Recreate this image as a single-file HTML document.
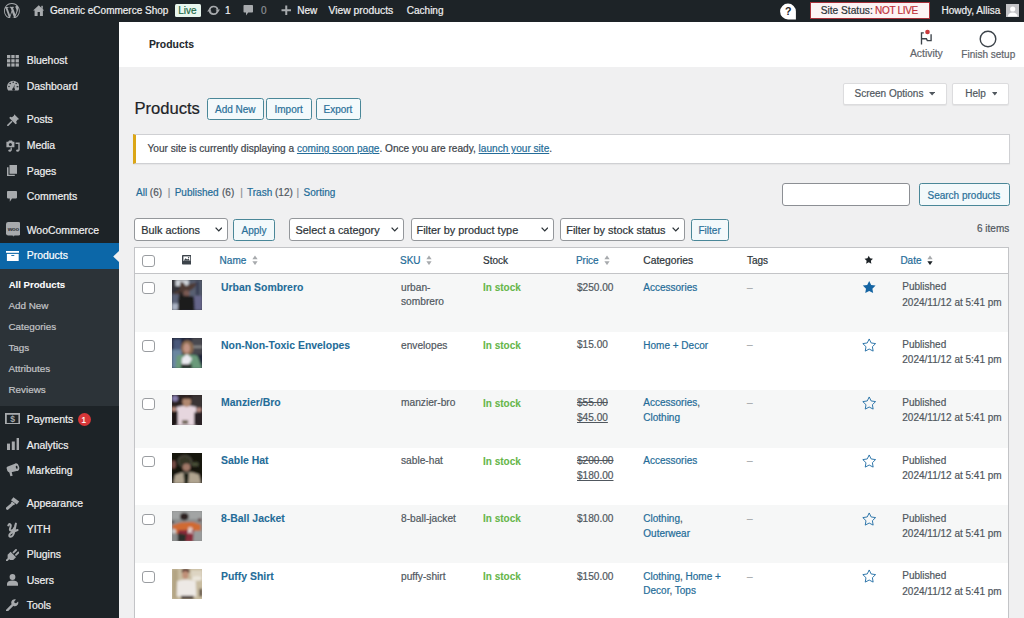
<!DOCTYPE html>
<html><head><meta charset="utf-8"><title>Products</title>
<style>
html,body{margin:0;padding:0;}
body{width:1024px;height:618px;overflow:hidden;position:relative;background:#f0f0f1;font-family:"Liberation Sans", sans-serif;}
.t{position:absolute;white-space:nowrap;line-height:1;-webkit-text-stroke:0.2px currentColor;}
svg{display:block}
</style></head><body>
<div style="position:absolute;left:0.0px;top:0.0px;width:1024.0px;height:22.0px;background:#1d2327"></div>
<div style="position:absolute;left:0.0px;top:22.0px;width:118.5px;height:596.0px;background:#1d2327"></div>
<div style="position:absolute;left:118.5px;top:22.0px;width:905.5px;height:45.0px;background:#fff"></div>
<svg style="position:absolute;left:4.1px;top:2.6px" width="15.8" height="15.8" viewBox="0 0 20 20"><path fill="#a7aaad" d="M20 10c0-5.51-4.49-10-10-10C4.48 0 0 4.49 0 10c0 5.52 4.48 10 10 10 5.51 0 10-4.48 10-10zM7.78 15.37L4.37 6.22c.55-.02 1.17-.08 1.17-.08.5-.06.44-1.13-.06-1.11 0 0-1.450.11-2.37.11-.18 0-.37 0-.58-.01C4.12 2.690 6.87 1.11 10 1.11c2.33 0 4.450.87 6.05 2.34-.68-.11-1.650.39-1.650 1.58 0 .74.450 1.360.9 2.1.35.61.55 1.360.55 2.46 0 1.49-1.4 5-1.4 5l-3.03-8.37c.54-.02.82-.17.82-.17.5-.05.44-1.25-.06-1.22 0 0-1.44.12-2.38.12-.87 0-2.33-.12-2.33-.12-.5-.03-.56 1.2-.06 1.22l.92.08 1.260 3.41zM17.41 10c.24-.64.74-1.870.43-4.25.7 1.290 1.050 2.710 1.050 4.25 0 3.290-1.730 6.240-4.48 7.780.99-2.650 1.99-5.330 3-7.780zM6.1 18.09C3.12 16.65 1.11 13.53 1.11 10c0-1.3.23-2.48.72-3.590C3.25 10.3 4.670 14.2 6.1 18.09zm4.03-6.630l2.58 6.98c-.86.29-1.76.45-2.71.45-.79 0-1.570-.11-2.29-.33.81-2.380 1.620-4.740 2.420-7.1z"/></svg>
<svg style="position:absolute;left:32.5px;top:5px" width="11.5" height="11" viewBox="0 0 11.5 11"><path d="M5.75 0.3 L11.4 5.6 L9.9 5.6 L9.9 11 L1.6 11 L1.6 5.6 L0.1 5.6 Z" fill="#a7aaad"/><rect x="4.6" y="7" width="2.3" height="4" fill="#1d2327"/><rect x="8.3" y="0.8" width="1.5" height="3" fill="#a7aaad"/></svg>
<div class="t" style="left:50.0px;top:6.34px;font-size:10px;font-weight:normal;color:#f0f0f1;">Generic eCommerce Shop</div>
<div style="position:absolute;left:174.6px;top:3.7px;width:26.2px;height:13.1px;background:#e8f6ee;border-radius:1.5px"></div>
<div class="t" style="left:178.2px;top:6.34px;font-size:10px;font-weight:normal;color:#1f6b47;font-weight:normal">Live</div>
<svg style="position:absolute;left:206px;top:4px" width="16" height="13" viewBox="0 0 16 13"><path d="M3.5 6 A4.2 4.2 0 0 1 11.7 5.6" fill="none" stroke="#a7aaad" stroke-width="1.7"/><path d="M11.7 6.6 A4.2 4.2 0 0 1 3.5 7" fill="none" stroke="#a7aaad" stroke-width="1.7"/><path d="M9.6 5.4 L14 5.4 L11.8 8.4 Z" fill="#a7aaad"/><path d="M1.2 7.4 L5.6 7.4 L3.4 4.4 Z" fill="#a7aaad"/></svg>
<div class="t" style="left:225.0px;top:6.34px;font-size:10px;font-weight:normal;color:#f0f0f1;">1</div>
<svg style="position:absolute;left:243px;top:5.4px" width="10.5" height="11" viewBox="0 0 10.5 11"><path d="M0.5 0.8 Q0.5 0 1.3 0 H9.2 Q10 0 10 0.8 V6.8 Q10 7.6 9.2 7.6 H5.2 L3 10.6 L3 7.6 H1.3 Q0.5 7.6 0.5 6.8 Z" fill="#a7aaad"/></svg>
<div class="t" style="left:261.0px;top:6.34px;font-size:10px;font-weight:normal;color:#8c8f94;">0</div>
<svg style="position:absolute;left:280.5px;top:5.4px" width="10.5" height="10.5" viewBox="0 0 10.5 10.5"><path d="M5.25 0.5 V10 M0.5 5.25 H10" stroke="#a7aaad" stroke-width="2"/></svg>
<div class="t" style="left:297.3px;top:6.34px;font-size:10px;font-weight:normal;color:#f0f0f1;">New</div>
<div class="t" style="left:328.5px;top:6.04px;font-size:10.35px;font-weight:normal;color:#f0f0f1;">View products</div>
<div class="t" style="left:406.8px;top:6.34px;font-size:10px;font-weight:normal;color:#f0f0f1;">Caching</div>
<svg style="position:absolute;left:776px;top:0px" width="26" height="22" viewBox="0 0 26 22"><path d="M12 3.6 A7.9 7.9 0 1 0 12 19.4 H19.9 V11.5 A7.9 7.9 0 0 0 12 3.6 Z" fill="#fff"/><text x="12.3" y="15.2" font-family="Liberation Sans" font-weight="bold" font-size="10.6" text-anchor="middle" fill="#1d2327">?</text></svg>
<div style="position:absolute;left:809.5px;top:2.0px;width:120.0px;height:17.2px;background:#fdf3f4;border:1.2px solid #a8303a;box-sizing:border-box"></div>
<div class="t" style="left:820.7px;top:6.17px;font-size:10.2px;font-weight:normal;color:#2c3338;">Site Status:</div>
<div class="t" style="left:875.0px;top:6.34px;font-size:10px;font-weight:normal;color:#c0303a;letter-spacing:-0.3px">NOT LIVE</div>
<div class="t" style="left:941.5px;top:6.34px;font-size:10px;font-weight:normal;color:#f0f0f1;">Howdy, Allisa</div>
<div style="position:absolute;left:1005.5px;top:3.9px;width:13.4px;height:13.2px;background:#c3c4c7"></div>
<svg style="position:absolute;left:1005.5px;top:3.9px" width="13.4" height="13.2" viewBox="0 0 13.4 13.2"><circle cx="6.7" cy="5" r="2.6" fill="#fff"/><path d="M1.8 12.6 Q2 8.6 6.7 8.4 Q11.4 8.6 11.6 12.6 Z" fill="#fff"/></svg>
<div class="t" style="left:148.9px;top:40.20px;font-size:10.4px;font-weight:bold;color:#23282d;-webkit-text-stroke:0.08px currentColor;">Products</div>
<svg style="position:absolute;left:912px;top:24px" width="28" height="26" viewBox="0 0 28 26"><path d="M9.5 8.2 V20.6 M9.5 8.8 H11.8 M9.5 14.7 H14.4 L15.3 16.6 H19.1 V10.3" fill="none" stroke="#3c434a" stroke-width="1.35"/><circle cx="15.5" cy="8" r="2.3" fill="#c93a3c"/></svg>
<div class="t" style="left:909.9px;top:49.30px;font-size:10.4px;font-weight:normal;color:#5f656b;">Activity</div>
<svg style="position:absolute;left:979px;top:29.8px" width="18" height="18" viewBox="0 0 18 18"><circle cx="9" cy="9" r="7.8" fill="none" stroke="#3c434a" stroke-width="1.4"/></svg>
<div class="t" style="left:961.3px;top:49.64px;font-size:10px;font-weight:normal;color:#5f656b;">Finish setup</div>
<div style="position:absolute;left:0.0px;top:242.5px;width:118.5px;height:26.0px;background:#0c67a8"></div>
<svg style="position:absolute;left:112.8px;top:250.5px" width="6" height="11" viewBox="0 0 6 11"><path d="M6 0 L0.2 5.5 L6 11 Z" fill="#f0f0f1"/></svg>
<div style="position:absolute;left:0.0px;top:269.0px;width:118.5px;height:136.6px;background:#2c3338"></div>
<div class="t" style="left:26.7px;top:56.25px;font-size:10.45px;font-weight:normal;color:#f0f0f1;">Bluehost</div>
<div class="t" style="left:26.7px;top:81.65px;font-size:10.45px;font-weight:normal;color:#f0f0f1;">Dashboard</div>
<div class="t" style="left:26.7px;top:115.15px;font-size:10.45px;font-weight:normal;color:#f0f0f1;">Posts</div>
<div class="t" style="left:26.7px;top:141.25px;font-size:10.45px;font-weight:normal;color:#f0f0f1;">Media</div>
<div class="t" style="left:26.7px;top:166.65px;font-size:10.45px;font-weight:normal;color:#f0f0f1;">Pages</div>
<div class="t" style="left:26.7px;top:191.85px;font-size:10.45px;font-weight:normal;color:#f0f0f1;">Comments</div>
<div class="t" style="left:26.7px;top:225.85px;font-size:10.45px;font-weight:normal;color:#f0f0f1;">WooCommerce</div>
<div class="t" style="left:26.7px;top:251.05px;font-size:10.45px;font-weight:normal;color:#fff;">Products</div>
<div class="t" style="left:26.7px;top:414.95px;font-size:10.45px;font-weight:normal;color:#f0f0f1;">Payments</div>
<div class="t" style="left:26.7px;top:440.55px;font-size:10.45px;font-weight:normal;color:#f0f0f1;">Analytics</div>
<div class="t" style="left:26.7px;top:466.15px;font-size:10.45px;font-weight:normal;color:#f0f0f1;">Marketing</div>
<div class="t" style="left:26.7px;top:499.15px;font-size:10.45px;font-weight:normal;color:#f0f0f1;">Appearance</div>
<div class="t" style="left:26.7px;top:524.55px;font-size:10.45px;font-weight:normal;color:#f0f0f1;">YITH</div>
<div class="t" style="left:26.7px;top:550.05px;font-size:10.45px;font-weight:normal;color:#f0f0f1;">Plugins</div>
<div class="t" style="left:26.7px;top:575.75px;font-size:10.45px;font-weight:normal;color:#f0f0f1;">Users</div>
<div class="t" style="left:26.7px;top:601.45px;font-size:10.45px;font-weight:normal;color:#f0f0f1;">Tools</div>
<div class="t" style="left:8.7px;top:280.37px;font-size:9.6px;font-weight:bold;color:#fff;-webkit-text-stroke:0.08px currentColor;">All Products</div>
<div class="t" style="left:8.4px;top:301.32px;font-size:9.9px;font-weight:normal;color:#c3c4c7;">Add New</div>
<div class="t" style="left:8.4px;top:322.32px;font-size:9.9px;font-weight:normal;color:#c3c4c7;">Categories</div>
<div class="t" style="left:8.4px;top:343.22px;font-size:9.9px;font-weight:normal;color:#c3c4c7;">Tags</div>
<div class="t" style="left:8.4px;top:364.12px;font-size:9.9px;font-weight:normal;color:#c3c4c7;">Attributes</div>
<div class="t" style="left:8.4px;top:384.92px;font-size:9.9px;font-weight:normal;color:#c3c4c7;">Reviews</div>
<svg style="position:absolute;left:6.5px;top:54.5px" width="12.5" height="12.3" viewBox="0 0 12.5 12.3"><rect x="0.0" y="0.0" width="3.3" height="3.2" fill="#a7aaad"/><rect x="4.3" y="0.0" width="3.3" height="3.2" fill="#a7aaad"/><rect x="8.6" y="0.0" width="3.3" height="3.2" fill="#a7aaad"/><rect x="0.0" y="4.2" width="3.3" height="3.2" fill="#a7aaad"/><rect x="4.3" y="4.2" width="3.3" height="3.2" fill="#a7aaad"/><rect x="8.6" y="4.2" width="3.3" height="3.2" fill="#a7aaad"/><rect x="0.0" y="8.4" width="3.3" height="3.2" fill="#a7aaad"/><rect x="4.3" y="8.4" width="3.3" height="3.2" fill="#a7aaad"/><rect x="8.6" y="8.4" width="3.3" height="3.2" fill="#a7aaad"/></svg>
<svg style="position:absolute;left:6.7px;top:80px" width="12.4" height="10.8" viewBox="0 0 12.4 10.8"><path d="M1.2 10.6 A6.2 6.2 0 1 1 11.2 10.6 Z" fill="#a7aaad"/><path d="M5.6 9.6 L7.6 4.6 L7.2 9.8 Z" fill="#1d2327"/><circle cx="6.6" cy="9.4" r="1.3" fill="#1d2327"/><circle cx="3.2" cy="3.6" r="0.75" fill="#1d2327"/><circle cx="6.2" cy="2.2" r="0.75" fill="#1d2327"/><circle cx="9.2" cy="3.6" r="0.75" fill="#1d2327"/><circle cx="2" cy="6.6" r="0.75" fill="#1d2327"/><path d="M9.6 6.7 H11.4" stroke="#1d2327" stroke-width="1.2"/></svg>
<svg style="position:absolute;left:6.5px;top:113.5px" width="12.5" height="12" viewBox="0 0 12.5 12"><path d="M7.2 0.3 L12.2 5.3 L10.8 5.6 L9.2 7.6 L9.8 9.4 L8.6 10.2 L2.3 3.9 L3.1 2.7 L4.9 3.3 L6.9 1.7 Z" fill="#a7aaad"/><path d="M5 7.3 L0.4 11.8" stroke="#a7aaad" stroke-width="1.6"/></svg>
<svg style="position:absolute;left:6px;top:139.8px" width="13.5" height="12" viewBox="0 0 13.5 12"><path d="M0.4 1.8 H2.2 L3 0.4 H6 L6.8 1.8 H8.4 V7.2 H0.4 Z" fill="#a7aaad"/><circle cx="4.4" cy="4.4" r="1.5" fill="#1d2327"/><path d="M9.6 3.2 H13 V10.6" fill="none" stroke="#a7aaad" stroke-width="1.4"/><ellipse cx="11.6" cy="10.6" rx="1.5" ry="1.2" fill="#a7aaad"/><path d="M5.2 7.6 V10.6" stroke="#a7aaad" stroke-width="1.3"/><ellipse cx="3.8" cy="10.6" rx="1.5" ry="1.2" fill="#a7aaad"/></svg>
<svg style="position:absolute;left:6.8px;top:165.3px" width="10.5" height="11.2" viewBox="0 0 10.5 11.2"><path d="M0 2.2 H1.5 V9.7 H7.8 V11.2 H0 Z" fill="#a7aaad"/><rect x="2.5" y="0" width="8" height="8.8" fill="#a7aaad"/></svg>
<svg style="position:absolute;left:7.1px;top:190.8px" width="10" height="11" viewBox="0 0 10 11"><path d="M0 0.8 Q0 0 0.8 0 H9.2 Q10 0 10 0.8 V6.6 Q10 7.4 9.2 7.4 H5 L2.8 10.8 V7.4 H0.8 Q0 7.4 0 6.6 Z" fill="#a7aaad"/></svg>
<svg style="position:absolute;left:5.5px;top:222px" width="14.8" height="14.5" viewBox="0 0 14.8 14.5"><rect x="0" y="0" width="14.7" height="13.4" rx="2.2" fill="#a7aaad"/><path d="M6.4 13.2 L7.6 14.4 L8.6 13.2 Z" fill="#a7aaad"/><text x="7.35" y="9.2" font-family="Liberation Sans" font-weight="bold" font-size="6" text-anchor="middle" fill="#2c2f33" letter-spacing="-0.2">woo</text></svg>
<svg style="position:absolute;left:5.8px;top:250.5px" width="13.6" height="10.2" viewBox="0 0 13.6 10.2"><rect x="0" y="0" width="13.6" height="1.8" fill="#fff"/><rect x="0.9" y="2.9" width="11.8" height="7.3" fill="#fff"/><rect x="5.3" y="4" width="3" height="0.9" fill="#0c67a8"/></svg>
<svg style="position:absolute;left:5px;top:412.6px" width="15.2" height="11.8" viewBox="0 0 15.2 11.8"><rect x="0.9" y="0.9" width="13.4" height="10" fill="none" stroke="#a7aaad" stroke-width="1.8"/><text x="7.6" y="9.3" font-family="Liberation Sans" font-weight="bold" font-size="8.6" text-anchor="middle" fill="#a7aaad">$</text></svg>
<div style="position:absolute;left:77.5px;top:413.2px;width:13.2px;height:13.2px;border-radius:50%;background:#d63638"></div>
<div class="t" style="left:81.6px;top:416.27px;font-size:8.3px;font-weight:normal;color:#fff;">1</div>
<svg style="position:absolute;left:6.6px;top:438px" width="12.6" height="12" viewBox="0 0 12.6 12"><rect x="0" y="5.6" width="3" height="6.4" fill="#a7aaad"/><rect x="4.8" y="3.5" width="3" height="8.5" fill="#a7aaad"/><rect x="9.6" y="0" width="3" height="12" fill="#a7aaad"/></svg>
<svg style="position:absolute;left:6px;top:463px" width="13.5" height="13.5" viewBox="0 0 13.5 13.5"><path d="M0.6 5.2 Q0.4 3.6 1.8 3.4 L9.6 0.6 L11.6 7.8 L4.2 9.4 Q2.4 9.6 1.4 8 Z" fill="#a7aaad"/><path d="M3.2 9 L5.6 8.6 L6.6 12.8 L4.4 13.2 Z" fill="#a7aaad"/><ellipse cx="10.6" cy="4.2" rx="2.5" ry="3.9" transform="rotate(-16 10.6 4.2)" fill="#a7aaad"/><ellipse cx="10.7" cy="4.2" rx="0.9" ry="1.5" transform="rotate(-16 10.7 4.2)" fill="#1d2327"/></svg>
<svg style="position:absolute;left:6px;top:496.5px" width="13.5" height="13" viewBox="0 0 13.5 13"><path d="M7.4 0.2 L13.2 4.6 L10.8 7.6 L5 3.2 Z" fill="#a7aaad"/><path d="M6 4.6 L9.2 7 L7.8 8.2 L4.8 6 Z" fill="#a7aaad"/><path d="M6.4 7 L1.4 11.4" stroke="#a7aaad" stroke-width="2.9" stroke-linecap="round"/></svg>
<svg style="position:absolute;left:6.5px;top:521.5px" width="13.5" height="17" viewBox="0 0 13.5 17"><path d="M1.3 3.4 Q2.6 0.9 3.7 3 Q3.9 4.6 3 6.6 Q2.5 8.8 4.4 8.6 Q6.4 8.2 7.9 4.8 L8.9 1.6 L7.3 9.6 Q6.3 14.6 3.6 14.7 Q1.8 14.7 2.5 12.6 Q3.7 10.6 10.6 8" fill="none" stroke="#a7aaad" stroke-width="2" stroke-linecap="round" stroke-linejoin="round"/></svg>
<svg style="position:absolute;left:6px;top:548.5px" width="13" height="12.5" viewBox="0 0 13 12.5"><path d="M7.6 3.4 L10 1 M10 5.8 L12.4 3.4" stroke="#a7aaad" stroke-width="1.9" stroke-linecap="round"/><path d="M4.6 2.8 L10 8.2 L7.2 11 L4 11 L1.6 8.6 L1.6 5.8 Z" fill="#a7aaad"/><path d="M0.6 11.6 L2.8 9.4" stroke="#a7aaad" stroke-width="1.9" stroke-linecap="round"/></svg>
<svg style="position:absolute;left:6.8px;top:573.5px" width="11" height="12" viewBox="0 0 11 12"><circle cx="5.5" cy="3" r="2.9" fill="#a7aaad"/><path d="M0 11.8 V9.4 Q0.5 6.4 5.5 6.4 Q10.5 6.4 11 9.4 V11.8 Z" fill="#a7aaad"/></svg>
<svg style="position:absolute;left:6.3px;top:598.5px" width="12.5" height="12.5" viewBox="0 0 12.5 12.5"><path d="M1 11.5 L6.6 5.9" stroke="#a7aaad" stroke-width="2.4" stroke-linecap="round"/><path d="M5.3 4.6 A3.6 3.6 0 0 1 10 0.4 L8.2 2.4 L8.6 3.9 L10.1 4.3 L12.1 2.5 A3.6 3.6 0 0 1 7.9 7.2 Z" fill="#a7aaad"/></svg>
<div class="t" style="left:134.4px;top:101.35px;font-size:16.6px;font-weight:normal;color:#1d2327;">Products</div>
<div style="position:absolute;left:207.0px;top:98.0px;width:56.6px;height:21.9px;border:1.2px solid #4a8798;background:#f3f9fb;border-radius:2.6px;box-sizing:border-box;"></div>
<div class="t" style="left:215.0px;top:104.73px;font-size:10px;font-weight:normal;color:#2a7099;">Add New</div>
<div style="position:absolute;left:266.4px;top:98.0px;width:46.1px;height:21.9px;border:1.2px solid #4a8798;background:#f3f9fb;border-radius:2.6px;box-sizing:border-box;"></div>
<div class="t" style="left:274.5px;top:104.73px;font-size:10px;font-weight:normal;color:#2a7099;">Import</div>
<div style="position:absolute;left:315.7px;top:98.0px;width:45.3px;height:21.9px;border:1.2px solid #4a8798;background:#f3f9fb;border-radius:2.6px;box-sizing:border-box;"></div>
<div class="t" style="left:323.5px;top:104.73px;font-size:10px;font-weight:normal;color:#2a7099;">Export</div>
<div style="position:absolute;left:842.7px;top:82.5px;width:104.6px;height:22.0px;background:#fff;border:1px solid #dcdcde;border-radius:2px;box-sizing:border-box;box-shadow:0 1px 1px rgba(0,0,0,.06)"></div>
<div class="t" style="left:854.5px;top:89.13px;font-size:10px;font-weight:normal;color:#50575e;">Screen Options</div>
<svg style="position:absolute;left:929px;top:92.2px" width="6.3" height="3.6" viewBox="0 0 6.3 3.6"><path d="M0 0 H6.3 L3.15 3.6 Z" fill="#50575e"/></svg>
<div style="position:absolute;left:952.4px;top:82.5px;width:57.1px;height:22.0px;background:#fff;border:1px solid #dcdcde;border-radius:2px;box-sizing:border-box;box-shadow:0 1px 1px rgba(0,0,0,.06)"></div>
<div class="t" style="left:965.2px;top:89.13px;font-size:10px;font-weight:normal;color:#50575e;">Help</div>
<svg style="position:absolute;left:991.6px;top:92.2px" width="5.6" height="3.6" viewBox="0 0 5.6 3.6"><path d="M0 0 H5.6 L2.8 3.6 Z" fill="#50575e"/></svg>
<div style="position:absolute;left:133.4px;top:134.2px;width:876.3px;height:29.6px;background:#fff;border:1px solid #cfd0d3;border-left:3px solid #dba617;box-sizing:border-box;box-shadow:0 1px 1px rgba(0,0,0,.04)"></div>
<div class="t" style="left:147.5px;top:144.35px;font-size:10.1px;font-weight:normal;color:#3c434a;">Your site is currently displaying a <span style="color:#246c98;text-decoration:underline">coming soon page</span>. Once you are ready, <span style="color:#246c98;text-decoration:underline">launch your site</span>.</div>
<div class="t" style="left:136.0px;top:188.13px;font-size:10px;font-weight:normal;color:#246c98;">All</div>
<div class="t" style="left:149.8px;top:188.13px;font-size:10px;font-weight:normal;color:#50575e;">(6)</div>
<div class="t" style="left:167.8px;top:188.13px;font-size:10px;font-weight:normal;color:#8c8f94;">|</div>
<div class="t" style="left:174.7px;top:188.13px;font-size:10px;font-weight:normal;color:#246c98;">Published</div>
<div class="t" style="left:222.0px;top:188.13px;font-size:10px;font-weight:normal;color:#50575e;">(6)</div>
<div class="t" style="left:240.2px;top:188.13px;font-size:10px;font-weight:normal;color:#8c8f94;">|</div>
<div class="t" style="left:247.0px;top:188.13px;font-size:10px;font-weight:normal;color:#246c98;">Trash</div>
<div class="t" style="left:275.0px;top:188.13px;font-size:10px;font-weight:normal;color:#50575e;">(12)</div>
<div class="t" style="left:296.6px;top:188.13px;font-size:10px;font-weight:normal;color:#8c8f94;">|</div>
<div class="t" style="left:303.6px;top:188.13px;font-size:10px;font-weight:normal;color:#246c98;">Sorting</div>
<div style="position:absolute;left:781.5px;top:183.3px;width:128.1px;height:22.5px;background:#fff;border:1px solid #8c8f94;border-radius:3px;box-sizing:border-box"></div>
<div style="position:absolute;left:919.0px;top:183.3px;width:90.7px;height:22.5px;border:1.2px solid #4a8798;background:#f3f9fb;border-radius:2.6px;box-sizing:border-box;"></div>
<div class="t" style="left:927.5px;top:190.53px;font-size:10px;font-weight:normal;color:#2a7099;">Search products</div>
<div style="position:absolute;left:134.2px;top:218.2px;width:93.5px;height:23.3px;background:#fff;border:1px solid #94979b;border-radius:3px;box-sizing:border-box"></div>
<div class="t" style="left:141.3px;top:225.37px;font-size:10.9px;font-weight:normal;color:#2c3338;">Bulk actions</div>
<svg style="position:absolute;left:214.7px;top:227px" width="7.5" height="5" viewBox="0 0 7.5 5"><path d="M0.6 0.6 L3.75 3.9 L6.9 0.6" fill="none" stroke="#2c3338" stroke-width="1.3"/></svg>
<div style="position:absolute;left:233.4px;top:218.5px;width:41.9px;height:22.7px;border:1.2px solid #4a8798;background:#f3f9fb;border-radius:2.6px;box-sizing:border-box;"></div>
<div class="t" style="left:241.5px;top:226.13px;font-size:10px;font-weight:normal;color:#2a7099;">Apply</div>
<div style="position:absolute;left:288.6px;top:218.2px;width:115.5px;height:23.3px;background:#fff;border:1px solid #94979b;border-radius:3px;box-sizing:border-box"></div>
<div class="t" style="left:295.5px;top:225.37px;font-size:10.9px;font-weight:normal;color:#2c3338;">Select a category</div>
<svg style="position:absolute;left:391.1px;top:227px" width="7.5" height="5" viewBox="0 0 7.5 5"><path d="M0.6 0.6 L3.75 3.9 L6.9 0.6" fill="none" stroke="#2c3338" stroke-width="1.3"/></svg>
<div style="position:absolute;left:410.6px;top:218.2px;width:143.1px;height:23.3px;background:#fff;border:1px solid #94979b;border-radius:3px;box-sizing:border-box"></div>
<div class="t" style="left:416.5px;top:225.37px;font-size:10.9px;font-weight:normal;color:#2c3338;">Filter by product type</div>
<svg style="position:absolute;left:540.7px;top:227px" width="7.5" height="5" viewBox="0 0 7.5 5"><path d="M0.6 0.6 L3.75 3.9 L6.9 0.6" fill="none" stroke="#2c3338" stroke-width="1.3"/></svg>
<div style="position:absolute;left:560.4px;top:218.2px;width:124.5px;height:23.3px;background:#fff;border:1px solid #94979b;border-radius:3px;box-sizing:border-box"></div>
<div class="t" style="left:566.3px;top:225.37px;font-size:10.9px;font-weight:normal;color:#2c3338;">Filter by stock status</div>
<svg style="position:absolute;left:671.9px;top:227px" width="7.5" height="5" viewBox="0 0 7.5 5"><path d="M0.6 0.6 L3.75 3.9 L6.9 0.6" fill="none" stroke="#2c3338" stroke-width="1.3"/></svg>
<div style="position:absolute;left:690.8px;top:218.5px;width:37.9px;height:22.7px;border:1.2px solid #4a8798;background:#f3f9fb;border-radius:2.6px;box-sizing:border-box;"></div>
<div class="t" style="left:698.5px;top:226.13px;font-size:10px;font-weight:normal;color:#2a7099;">Filter</div>
<div class="t" style="left:977.0px;top:224.23px;font-size:10px;font-weight:normal;color:#50575e;">6 items</div>
<div style="position:absolute;left:134.3px;top:246.6px;width:874.7px;height:372.4px;background:#fff;border:1px solid #c3c4c7;border-bottom:none;box-sizing:border-box;box-shadow:0 1px 1px rgba(0,0,0,.04)"></div>
<div style="position:absolute;left:135.3px;top:273.2px;width:872.7px;height:1.0px;background:#c3c4c7"></div>
<div style="position:absolute;left:135.3px;top:274.2px;width:872.7px;height:57.8px;background:#f6f7f7"></div>
<div style="position:absolute;left:135.3px;top:389.8px;width:872.7px;height:57.8px;background:#f6f7f7"></div>
<div style="position:absolute;left:135.3px;top:505.4px;width:872.7px;height:57.8px;background:#f6f7f7"></div>
<div style="position:absolute;left:142.4px;top:255.2px;width:12.2px;height:11.8px;background:#fff;border:1.1px solid #9a9da1;border-radius:3px;box-sizing:border-box"></div>
<svg style="position:absolute;left:181.5px;top:255px" width="9.6" height="9.6" viewBox="0 0 9.6 9.6"><rect x="0" y="0" width="9.6" height="9.6" rx="0.8" fill="#3c434a"/><rect x="1.4" y="1.4" width="6.8" height="4.6" fill="#fff"/><path d="M1.6 5.8 L3.6 3.2 L5.2 4.6 L6.4 3.6 L8 5.8 Z" fill="#3c434a"/><circle cx="6.6" cy="2.6" r="0.7" fill="#3c434a"/></svg>
<div class="t" style="left:219.6px;top:256.43px;font-size:10px;font-weight:normal;color:#246c98;">Name</div>
<svg style="position:absolute;left:252px;top:254.6px" width="6" height="10.6" viewBox="0 0 6 10.6"><path d="M0.4 4.3 L3 0.5 L5.6 4.3 Z" fill="#a7aaad"/><path d="M0.4 6.3 L3 10.1 L5.6 6.3 Z" fill="#a7aaad"/></svg>
<div class="t" style="left:400.0px;top:256.43px;font-size:10px;font-weight:normal;color:#246c98;">SKU</div>
<svg style="position:absolute;left:425.5px;top:254.6px" width="6" height="10.6" viewBox="0 0 6 10.6"><path d="M0.4 4.3 L3 0.5 L5.6 4.3 Z" fill="#a7aaad"/><path d="M0.4 6.3 L3 10.1 L5.6 6.3 Z" fill="#a7aaad"/></svg>
<div class="t" style="left:483.0px;top:256.43px;font-size:10px;font-weight:normal;color:#2c3338;">Stock</div>
<div class="t" style="left:575.9px;top:256.43px;font-size:10px;font-weight:normal;color:#246c98;">Price</div>
<svg style="position:absolute;left:604.2px;top:254.6px" width="6" height="10.6" viewBox="0 0 6 10.6"><path d="M0.4 4.3 L3 0.5 L5.6 4.3 Z" fill="#a7aaad"/><path d="M0.4 6.3 L3 10.1 L5.6 6.3 Z" fill="#a7aaad"/></svg>
<div class="t" style="left:643.3px;top:256.18px;font-size:10.3px;font-weight:normal;color:#2c3338;">Categories</div>
<div class="t" style="left:746.9px;top:256.43px;font-size:10px;font-weight:normal;color:#2c3338;">Tags</div>
<svg style="position:absolute;left:864px;top:255px" width="9.5" height="9.5" viewBox="0 0 24 24"><path d="M12.00 1.60 L15.29 8.27 L22.65 9.34 L17.33 14.53 L18.58 21.86 L12.00 18.40 L5.42 21.86 L6.67 14.53 L1.35 9.34 L8.71 8.27 Z" fill="#1d2327"/></svg>
<div class="t" style="left:900.4px;top:256.43px;font-size:10px;font-weight:normal;color:#246c98;">Date</div>
<svg style="position:absolute;left:927.2px;top:254.6px" width="6" height="10.6" viewBox="0 0 6 10.6"><path d="M0.4 4.3 L3 0.5 L5.6 4.3 Z" fill="#a7aaad"/><path d="M0.4 6.3 L3 10.1 L5.6 6.3 Z" fill="#1d2327"/></svg>
<div style="position:absolute;left:142.4px;top:282.3px;width:12.2px;height:11.8px;background:#fff;border:1.1px solid #9a9da1;border-radius:3px;box-sizing:border-box"></div>
<svg style="position:absolute;left:171.7px;top:279.8px" width="30" height="30" viewBox="35 38 550 550"><defs><filter id="bl0" x="-0.1" y="-0.1" width="1.2" height="1.2"><feGaussianBlur stdDeviation="16"/></filter><clipPath id="cp0"><rect x="35" y="38" width="550" height="550"/></clipPath></defs><g clip-path="url(#cp0)"><rect x="0" y="0" width="620" height="620" fill="#303238"/><g filter="url(#bl0)"><rect x="0" y="0" width="620" height="620" fill="#303238"/><rect x="100" y="38" width="250" height="110" fill="#cfd4da"/><rect x="340" y="38" width="250" height="300" fill="#596072"/><rect x="470" y="60" width="70" height="260" fill="#3a4054"/><rect x="35" y="290" width="150" height="200" fill="#5c6478"/><rect x="35" y="470" width="130" height="120" fill="#aab3c4"/><rect x="430" y="330" width="160" height="260" fill="#66668a"/><path d="M50 300 Q120 230 170 220 L190 70 Q240 60 290 150 Q380 90 480 90 Q470 200 330 250 L190 300 Z" fill="#4e3b34"/><ellipse cx="300" cy="290" rx="55" ry="62" fill="#7a5a52"/><path d="M170 250 Q220 240 240 330 L230 600 L140 600 Q150 400 170 250 Z" fill="#2a2220"/><path d="M160 340 Q300 310 440 350 L450 600 L150 600 Z" fill="#1c1b1e"/></g></g></svg>
<div class="t" style="left:221.0px;top:282.85px;font-size:10.45px;font-weight:bold;color:#246c98;-webkit-text-stroke:0.08px currentColor;">Urban Sombrero</div>
<div class="t" style="left:401.0px;top:282.77px;font-size:10.2px;font-weight:normal;color:#50575e;">urban-</div>
<div class="t" style="left:401.0px;top:297.37px;font-size:10.2px;font-weight:normal;color:#50575e;">sombrero</div>
<div class="t" style="left:483.0px;top:283.24px;font-size:10px;font-weight:bold;color:#66b64a;-webkit-text-stroke:0.08px currentColor;">In stock</div>
<div class="t" style="left:577.0px;top:282.55px;font-size:10.1px;font-weight:normal;color:#50575e;">$250.00</div>
<div class="t" style="left:643.3px;top:282.84px;font-size:10px;font-weight:normal;color:#246c98;">Accessories</div>
<div class="t" style="left:747.0px;top:282.63px;font-size:10px;font-weight:normal;color:#a7aaad;">–</div>
<svg style="position:absolute;left:861.6px;top:280.4px" width="14.4" height="14.4" viewBox="0 0 24 24"><path d="M12.00 1.60 L15.29 8.27 L22.65 9.34 L17.33 14.53 L18.58 21.86 L12.00 18.40 L5.42 21.86 L6.67 14.53 L1.35 9.34 L8.71 8.27 Z" fill="#1565a3"/></svg>
<div class="t" style="left:902.3px;top:282.44px;font-size:10px;font-weight:normal;color:#50575e;">Published</div>
<div class="t" style="left:902.3px;top:297.63px;font-size:10px;font-weight:normal;color:#50575e;">2024/11/12 at 5:41 pm</div>
<div style="position:absolute;left:142.4px;top:340.1px;width:12.2px;height:11.8px;background:#fff;border:1.1px solid #9a9da1;border-radius:3px;box-sizing:border-box"></div>
<svg style="position:absolute;left:171.7px;top:337.6px" width="30" height="30" viewBox="35 38 550 550"><defs><filter id="bl1" x="-0.1" y="-0.1" width="1.2" height="1.2"><feGaussianBlur stdDeviation="16"/></filter><clipPath id="cp1"><rect x="35" y="38" width="550" height="550"/></clipPath></defs><g clip-path="url(#cp1)"><rect x="0" y="0" width="620" height="620" fill="#22283a"/><g filter="url(#bl1)"><rect x="0" y="0" width="620" height="620" fill="#22283a"/><rect x="60" y="60" width="140" height="200" fill="#48587a"/><rect x="35" y="250" width="180" height="340" fill="#6a86a0"/><rect x="400" y="38" width="190" height="300" fill="#4a4a50"/><rect x="410" y="180" width="180" height="40" fill="#8a8a8a"/><ellipse cx="315" cy="220" rx="115" ry="140" fill="#8a6a50"/><ellipse cx="305" cy="225" rx="62" ry="90" fill="#c29484"/><path d="M100 600 L120 360 Q300 320 500 360 L590 600 Z" fill="#6a9a7a"/><path d="M215 410 L310 330 L405 420 L335 535 L215 520 Z" fill="#ebeaf0"/><rect x="200" y="520" width="200" height="70" fill="#2a2a2a"/></g></g></svg>
<div class="t" style="left:221.0px;top:340.65px;font-size:10.45px;font-weight:bold;color:#246c98;-webkit-text-stroke:0.08px currentColor;">Non-Non-Toxic Envelopes</div>
<div class="t" style="left:401.0px;top:340.57px;font-size:10.2px;font-weight:normal;color:#50575e;">envelopes</div>
<div class="t" style="left:483.0px;top:341.04px;font-size:10px;font-weight:bold;color:#66b64a;-webkit-text-stroke:0.08px currentColor;">In stock</div>
<div class="t" style="left:577.0px;top:340.35px;font-size:10.1px;font-weight:normal;color:#50575e;">$15.00</div>
<div class="t" style="left:643.3px;top:340.64px;font-size:10px;font-weight:normal;color:#246c98;">Home + Decor</div>
<div class="t" style="left:747.0px;top:340.44px;font-size:10px;font-weight:normal;color:#a7aaad;">–</div>
<svg style="position:absolute;left:861.6px;top:338.2px" width="14.4" height="14.4" viewBox="0 0 24 24"><path d="M12.00 1.60 L15.29 8.27 L22.65 9.34 L17.33 14.53 L18.58 21.86 L12.00 18.40 L5.42 21.86 L6.67 14.53 L1.35 9.34 L8.71 8.27 Z" fill="none" stroke="#1c6aa3" stroke-width="1.5" stroke-linejoin="round"/></svg>
<div class="t" style="left:902.3px;top:340.24px;font-size:10px;font-weight:normal;color:#50575e;">Published</div>
<div class="t" style="left:902.3px;top:355.44px;font-size:10px;font-weight:normal;color:#50575e;">2024/11/12 at 5:41 pm</div>
<div style="position:absolute;left:142.4px;top:397.9px;width:12.2px;height:11.8px;background:#fff;border:1.1px solid #9a9da1;border-radius:3px;box-sizing:border-box"></div>
<svg style="position:absolute;left:171.7px;top:395.4px" width="30" height="30" viewBox="35 38 550 550"><defs><filter id="bl2" x="-0.1" y="-0.1" width="1.2" height="1.2"><feGaussianBlur stdDeviation="16"/></filter><clipPath id="cp2"><rect x="35" y="38" width="550" height="550"/></clipPath></defs><g clip-path="url(#cp2)"><rect x="0" y="0" width="620" height="620" fill="#2a2224"/><g filter="url(#bl2)"><rect x="0" y="0" width="620" height="620" fill="#2a2224"/><circle cx="90" cy="100" r="55" fill="#8a80b0"/><rect x="400" y="40" width="190" height="300" fill="#3a3436"/><path d="M100 600 L120 260 Q300 200 480 260 L480 600 Z" fill="#e6d6de"/><ellipse cx="305" cy="160" rx="80" ry="100" fill="#b08870"/><path d="M230 80 Q305 40 380 80 L380 110 L230 110 Z" fill="#2a1e1a"/><rect x="35" y="330" width="105" height="260" fill="#1c1818"/><rect x="440" y="360" width="150" height="230" fill="#2a2426"/><circle cx="70" cy="300" r="40" fill="#c09080"/><circle cx="530" cy="310" r="45" fill="#b88a80"/><rect x="220" y="500" width="110" height="70" fill="#6a6050"/></g></g></svg>
<div class="t" style="left:221.0px;top:398.45px;font-size:10.45px;font-weight:bold;color:#246c98;-webkit-text-stroke:0.08px currentColor;">Manzier/Bro</div>
<div class="t" style="left:401.0px;top:398.37px;font-size:10.2px;font-weight:normal;color:#50575e;">manzier-bro</div>
<div class="t" style="left:483.0px;top:398.83px;font-size:10px;font-weight:bold;color:#66b64a;-webkit-text-stroke:0.08px currentColor;">In stock</div>
<div class="t" style="left:577.0px;top:398.15px;font-size:10.1px;font-weight:normal;color:#50575e;text-decoration:line-through">$55.00</div>
<div class="t" style="left:577.0px;top:412.75px;font-size:10.1px;font-weight:normal;color:#50575e;text-decoration:underline">$45.00</div>
<div class="t" style="left:643.3px;top:398.44px;font-size:10px;font-weight:normal;color:#50575e;"><span style="color:#246c98">Accessories</span>,</div>
<div class="t" style="left:643.3px;top:413.04px;font-size:10px;font-weight:normal;color:#246c98;">Clothing</div>
<div class="t" style="left:747.0px;top:398.23px;font-size:10px;font-weight:normal;color:#a7aaad;">–</div>
<svg style="position:absolute;left:861.6px;top:395.99999999999994px" width="14.4" height="14.4" viewBox="0 0 24 24"><path d="M12.00 1.60 L15.29 8.27 L22.65 9.34 L17.33 14.53 L18.58 21.86 L12.00 18.40 L5.42 21.86 L6.67 14.53 L1.35 9.34 L8.71 8.27 Z" fill="none" stroke="#1c6aa3" stroke-width="1.5" stroke-linejoin="round"/></svg>
<div class="t" style="left:902.3px;top:398.03px;font-size:10px;font-weight:normal;color:#50575e;">Published</div>
<div class="t" style="left:902.3px;top:413.23px;font-size:10px;font-weight:normal;color:#50575e;">2024/11/12 at 5:41 pm</div>
<div style="position:absolute;left:142.4px;top:455.7px;width:12.2px;height:11.8px;background:#fff;border:1.1px solid #9a9da1;border-radius:3px;box-sizing:border-box"></div>
<svg style="position:absolute;left:171.7px;top:453.2px" width="30" height="30" viewBox="35 38 550 550"><defs><filter id="bl3" x="-0.1" y="-0.1" width="1.2" height="1.2"><feGaussianBlur stdDeviation="16"/></filter><clipPath id="cp3"><rect x="35" y="38" width="550" height="550"/></clipPath></defs><g clip-path="url(#cp3)"><rect x="0" y="0" width="620" height="620" fill="#16120f"/><g filter="url(#bl3)"><rect x="0" y="0" width="620" height="620" fill="#16120f"/><ellipse cx="65" cy="250" rx="40" ry="75" fill="#7a5048"/><ellipse cx="270" cy="190" rx="135" ry="115" fill="#47463a"/><ellipse cx="270" cy="195" rx="105" ry="95" fill="#363428"/><ellipse cx="300" cy="300" rx="70" ry="70" fill="#a07868"/><rect x="400" y="210" width="120" height="70" fill="#4a5038"/><path d="M60 600 L90 440 Q300 340 530 430 L570 600 Z" fill="#b0a490"/><path d="M245 400 L350 400 L330 600 L260 600 Z" fill="#1e2018"/></g></g></svg>
<div class="t" style="left:221.0px;top:456.25px;font-size:10.45px;font-weight:bold;color:#246c98;-webkit-text-stroke:0.08px currentColor;">Sable Hat</div>
<div class="t" style="left:401.0px;top:456.17px;font-size:10.2px;font-weight:normal;color:#50575e;">sable-hat</div>
<div class="t" style="left:483.0px;top:456.63px;font-size:10px;font-weight:bold;color:#66b64a;-webkit-text-stroke:0.08px currentColor;">In stock</div>
<div class="t" style="left:577.0px;top:455.95px;font-size:10.1px;font-weight:normal;color:#50575e;text-decoration:line-through">$200.00</div>
<div class="t" style="left:577.0px;top:470.55px;font-size:10.1px;font-weight:normal;color:#50575e;text-decoration:underline">$180.00</div>
<div class="t" style="left:643.3px;top:456.24px;font-size:10px;font-weight:normal;color:#246c98;">Accessories</div>
<div class="t" style="left:747.0px;top:456.03px;font-size:10px;font-weight:normal;color:#a7aaad;">–</div>
<svg style="position:absolute;left:861.6px;top:453.79999999999995px" width="14.4" height="14.4" viewBox="0 0 24 24"><path d="M12.00 1.60 L15.29 8.27 L22.65 9.34 L17.33 14.53 L18.58 21.86 L12.00 18.40 L5.42 21.86 L6.67 14.53 L1.35 9.34 L8.71 8.27 Z" fill="none" stroke="#1c6aa3" stroke-width="1.5" stroke-linejoin="round"/></svg>
<div class="t" style="left:902.3px;top:455.83px;font-size:10px;font-weight:normal;color:#50575e;">Published</div>
<div class="t" style="left:902.3px;top:471.03px;font-size:10px;font-weight:normal;color:#50575e;">2024/11/12 at 5:41 pm</div>
<div style="position:absolute;left:142.4px;top:513.5px;width:12.2px;height:11.8px;background:#fff;border:1.1px solid #9a9da1;border-radius:3px;box-sizing:border-box"></div>
<svg style="position:absolute;left:171.7px;top:511.0px" width="30" height="30" viewBox="35 38 550 550"><defs><filter id="bl4" x="-0.1" y="-0.1" width="1.2" height="1.2"><feGaussianBlur stdDeviation="16"/></filter><clipPath id="cp4"><rect x="35" y="38" width="550" height="550"/></clipPath></defs><g clip-path="url(#cp4)"><rect x="0" y="0" width="620" height="620" fill="#8a8c8c"/><g filter="url(#bl4)"><rect x="0" y="0" width="620" height="620" fill="#8a8c8c"/><rect x="35" y="38" width="550" height="150" fill="#a2a4a4"/><ellipse cx="260" cy="140" rx="80" ry="70" fill="#2e2420"/><path d="M40 300 L200 250 L420 240 L560 290 L560 400 L440 430 L150 470 L60 420 Z" fill="#d06a30"/><path d="M150 390 L440 380 L420 600 L150 600 Z" fill="#8a2a3a"/><path d="M140 440 L300 470 L280 600 L140 600 Z" fill="#2a2e2a"/><rect x="430" y="400" width="160" height="190" fill="#9a9c9c"/><circle cx="70" cy="410" r="42" fill="#cfcfcf"/><path d="M340 450 L350 350 Q400 340 400 380 Q390 400 360 400 L410 450" fill="none" stroke="#e6dede" stroke-width="28"/><circle cx="50" cy="240" r="25" fill="#3a2020"/><circle cx="540" cy="200" r="30" fill="#5a3030"/></g></g></svg>
<div class="t" style="left:221.0px;top:514.05px;font-size:10.45px;font-weight:bold;color:#246c98;-webkit-text-stroke:0.08px currentColor;">8-Ball Jacket</div>
<div class="t" style="left:401.0px;top:513.97px;font-size:10.2px;font-weight:normal;color:#50575e;">8-ball-jacket</div>
<div class="t" style="left:483.0px;top:514.43px;font-size:10px;font-weight:bold;color:#66b64a;-webkit-text-stroke:0.08px currentColor;">In stock</div>
<div class="t" style="left:577.0px;top:513.75px;font-size:10.1px;font-weight:normal;color:#50575e;">$180.00</div>
<div class="t" style="left:643.3px;top:514.03px;font-size:10px;font-weight:normal;color:#50575e;"><span style="color:#246c98">Clothing</span>,</div>
<div class="t" style="left:643.3px;top:528.63px;font-size:10px;font-weight:normal;color:#246c98;">Outerwear</div>
<div class="t" style="left:747.0px;top:513.83px;font-size:10px;font-weight:normal;color:#a7aaad;">–</div>
<svg style="position:absolute;left:861.6px;top:511.59999999999997px" width="14.4" height="14.4" viewBox="0 0 24 24"><path d="M12.00 1.60 L15.29 8.27 L22.65 9.34 L17.33 14.53 L18.58 21.86 L12.00 18.40 L5.42 21.86 L6.67 14.53 L1.35 9.34 L8.71 8.27 Z" fill="none" stroke="#1c6aa3" stroke-width="1.5" stroke-linejoin="round"/></svg>
<div class="t" style="left:902.3px;top:513.63px;font-size:10px;font-weight:normal;color:#50575e;">Published</div>
<div class="t" style="left:902.3px;top:528.83px;font-size:10px;font-weight:normal;color:#50575e;">2024/11/12 at 5:41 pm</div>
<div style="position:absolute;left:142.4px;top:571.3px;width:12.2px;height:11.8px;background:#fff;border:1.1px solid #9a9da1;border-radius:3px;box-sizing:border-box"></div>
<svg style="position:absolute;left:171.7px;top:568.8000000000001px" width="30" height="30" viewBox="35 38 550 550"><defs><filter id="bl5" x="-0.1" y="-0.1" width="1.2" height="1.2"><feGaussianBlur stdDeviation="16"/></filter><clipPath id="cp5"><rect x="35" y="38" width="550" height="550"/></clipPath></defs><g clip-path="url(#cp5)"><rect x="0" y="0" width="620" height="620" fill="#c8bca0"/><g filter="url(#bl5)"><rect x="0" y="0" width="620" height="620" fill="#c8bca0"/><rect x="35" y="38" width="110" height="550" fill="#b3a484"/><rect x="380" y="60" width="210" height="120" fill="#ddd4c2"/><ellipse cx="490" cy="210" rx="95" ry="45" fill="#ebe6dc"/><rect x="540" y="400" width="50" height="140" fill="#4a3830"/><ellipse cx="285" cy="75" rx="72" ry="50" fill="#5a3830"/><ellipse cx="280" cy="150" rx="58" ry="75" fill="#c09078"/><path d="M120 540 L130 260 Q290 200 470 260 L480 540 Z" fill="#ede9e5"/><rect x="200" y="530" width="230" height="60" fill="#3a2a28"/></g></g></svg>
<div class="t" style="left:221.0px;top:571.85px;font-size:10.45px;font-weight:bold;color:#246c98;-webkit-text-stroke:0.08px currentColor;">Puffy Shirt</div>
<div class="t" style="left:401.0px;top:571.77px;font-size:10.2px;font-weight:normal;color:#50575e;">puffy-shirt</div>
<div class="t" style="left:483.0px;top:572.24px;font-size:10px;font-weight:bold;color:#66b64a;-webkit-text-stroke:0.08px currentColor;">In stock</div>
<div class="t" style="left:577.0px;top:571.55px;font-size:10.1px;font-weight:normal;color:#50575e;">$150.00</div>
<div class="t" style="left:643.3px;top:571.84px;font-size:10px;font-weight:normal;color:#50575e;"><span style="color:#246c98">Clothing</span>, <span style="color:#246c98">Home +</span></div>
<div class="t" style="left:643.3px;top:586.44px;font-size:10px;font-weight:normal;color:#50575e;"><span style="color:#246c98">Decor</span>, <span style="color:#246c98">Tops</span></div>
<div class="t" style="left:747.0px;top:571.63px;font-size:10px;font-weight:normal;color:#a7aaad;">–</div>
<svg style="position:absolute;left:861.6px;top:569.4000000000001px" width="14.4" height="14.4" viewBox="0 0 24 24"><path d="M12.00 1.60 L15.29 8.27 L22.65 9.34 L17.33 14.53 L18.58 21.86 L12.00 18.40 L5.42 21.86 L6.67 14.53 L1.35 9.34 L8.71 8.27 Z" fill="none" stroke="#1c6aa3" stroke-width="1.5" stroke-linejoin="round"/></svg>
<div class="t" style="left:902.3px;top:571.44px;font-size:10px;font-weight:normal;color:#50575e;">Published</div>
<div class="t" style="left:902.3px;top:586.63px;font-size:10px;font-weight:normal;color:#50575e;">2024/11/12 at 5:41 pm</div>
</body></html>
